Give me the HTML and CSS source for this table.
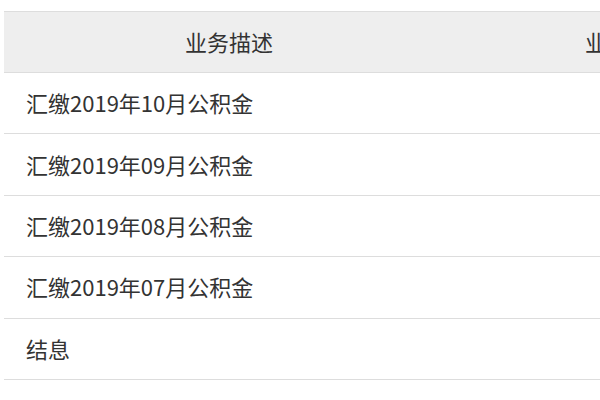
FILE: index.html
```html
<!DOCTYPE html>
<html lang="zh">
<head>
<meta charset="utf-8">
<link rel="stylesheet" href="styles.css">
</head>
<body>
<div class="wrap">
<table class="grid">
  <thead>
    <tr><th class="c1">业务描述</th><th class="c2">业务类型</th></tr>
  </thead>
  <tbody>
    <tr><td>汇缴2019年10月公积金</td><td></td></tr>
    <tr><td>汇缴2019年09月公积金</td><td></td></tr>
    <tr><td>汇缴2019年08月公积金</td><td></td></tr>
    <tr><td>汇缴2019年07月公积金</td><td></td></tr>
    <tr><td>结息</td><td></td></tr>
    <tr><td>汇缴2019年06月公积金</td><td></td></tr>
  </tbody>
</table>
</div>
</body>
</html>
```
FILE: styles.css
```css
html, body { margin: 0; padding: 0; background: #fff; overflow: hidden; }
.wrap { padding: 11px 0 0 4px; width: 600px; height: 400px; overflow: hidden; box-sizing: border-box; }
.grid {
  border-collapse: collapse;
  table-layout: fixed;
  width: 800px;
  font-family: "Noto Sans CJK SC", "Noto Sans", sans-serif;
  font-size: 22px;
  color: #333;
}
.grid th, .grid td {
  border-top: 1px solid #ddd;
  border-bottom: 1px solid #ddd;
  height: 61.4px;
  padding: 0 22px 2px;
  box-sizing: border-box;
  line-height: 1;
  vertical-align: middle;
  white-space: nowrap;
}
.grid th { background: #eee; font-weight: normal; text-align: center; height: 61px; }
.grid td { text-align: left; }
.c1 { width: 450px; }
.c2 { width: 350px; }
```
